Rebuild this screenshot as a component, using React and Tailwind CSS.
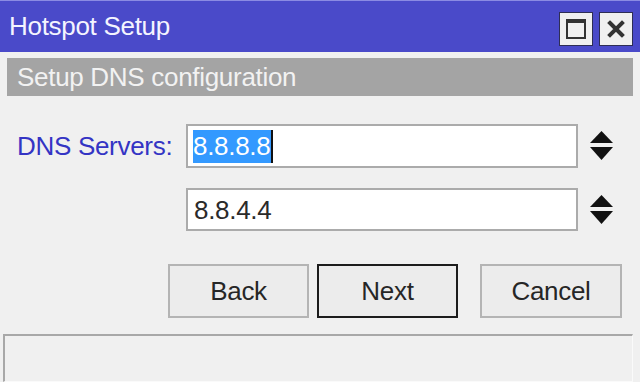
import React from "react";

function Spinner() {
  return (
    <svg width="23" height="30" viewBox="0 0 23 30" className="block">
      <polygon points="11.5,0 23,12 0,12" fill="#111" />
      <polygon points="0,16 23,16 11.5,29" fill="#111" />
    </svg>
  );
}

export default function App() {
  return (
    <div
      className="w-[640px] h-[382px] bg-[#f0f0f0] flex flex-col overflow-hidden text-[26px] tracking-[-0.3px] text-[#262626]"
      style={{ fontFamily: '"Liberation Sans", Arial, sans-serif' }}
    >
      {/* Title bar */}
      <div className="h-[52px] bg-[#4a4ac9] border-t border-[#8b8be3] flex items-center pl-[9px] pr-[7px]">
        <span className="text-[#f4f4ff] leading-none mt-[-1px]">Hotspot Setup</span>
        <div className="ml-auto flex gap-[6px] mt-[4px]">
          <div className="w-[34px] h-[34px] bg-[#f0f0f0] border border-[#2e2e55] flex items-center justify-center">
            <div className="w-[20px] h-[20px] border-2 border-t-[4px] border-[#333]" />
          </div>
          <div className="w-[34px] h-[34px] bg-[#f0f0f0] border border-[#2e2e55] flex items-center justify-center">
            <svg width="18" height="18" viewBox="0 0 18 18">
              <path d="M3 3 L15 15 M15 3 L3 15" stroke="#333" strokeWidth="4" strokeLinecap="square" />
            </svg>
          </div>
        </div>
      </div>

      {/* Section header */}
      <div className="px-[7px] pt-[6px]">
        <div className="h-[38px] bg-[#a4a4a4] flex items-center pl-[10px]">
          <span className="text-[#f2f2f2] leading-none">Setup DNS configuration</span>
        </div>
      </div>

      {/* Form rows */}
      <div className="flex flex-col gap-[20px] mt-[28px]">
        <div className="flex items-center">
          <div className="w-[186px] pl-[17px] text-[#3434c4] leading-none">DNS Servers:</div>
          <div className="w-[392px] h-[44px] bg-white border-2 border-[#ababab] flex items-center pl-[5px]">
            <span className="bg-[#3399ff] text-white leading-[33px] h-[33px] border-r-2 border-[#111] pr-[1px]">8.8.8.8</span>
          </div>
          <div className="ml-[12px]">
            <Spinner />
          </div>
        </div>
        <div className="flex items-center">
          <div className="w-[186px]" />
          <div className="w-[392px] h-[43px] bg-white border-2 border-[#ababab] flex items-center pl-[6px]">
            <span className="leading-none text-[#2a2a2a]">8.8.4.4</span>
          </div>
          <div className="ml-[12px]">
            <Spinner />
          </div>
        </div>
      </div>

      {/* Buttons */}
      <div className="flex mt-[33px] pl-[168px]">
        <button className="w-[141px] h-[54px] bg-[#ececec] border-2 border-[#b4b4b4] flex items-center justify-center leading-none text-[#262626]">
          Back
        </button>
        <button className="ml-[8px] w-[141px] h-[54px] bg-[#ececec] border-2 border-[#1c1c1c] flex items-center justify-center leading-none text-[#262626]">
          Next
        </button>
        <button className="ml-[22px] w-[142px] h-[54px] bg-[#ececec] border-2 border-[#b4b4b4] flex items-center justify-center leading-none text-[#262626]">
          Cancel
        </button>
      </div>

      {/* Status bar */}
      <div className="mt-[16px] ml-[3px] w-[630px] h-[48px] border-t-2 border-l-2 border-[#a8a8a8] border-r border-b border-r-[#fafafa] border-b-[#fafafa]" />
    </div>
  );
}
